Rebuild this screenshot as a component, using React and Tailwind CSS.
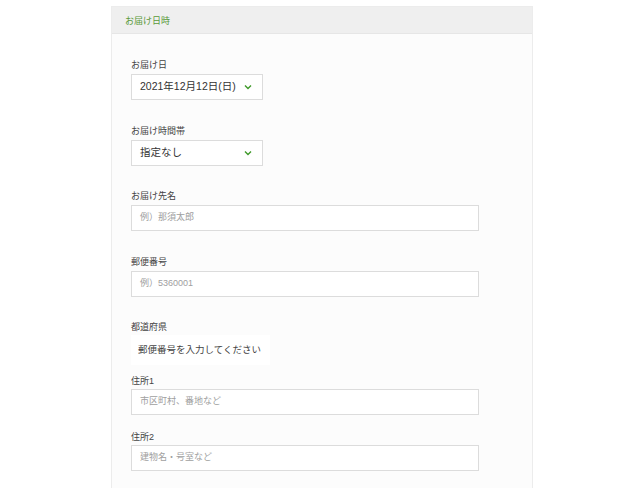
const FONT = { fontFamily: '"Liberation Sans", "Noto Sans CJK JP", sans-serif' }

function Chevron() {
  return (
    <svg width="8" height="6" viewBox="0 0 8 6" className="absolute right-[10px] top-1/2 -translate-y-1/2">
      <path d="M1 1.5 L4 4.5 L7 1.5" fill="none" stroke="#3f9a2a" strokeWidth="1.4" />
    </svg>
  )
}

function Select({ value }) {
  return (
    <div className="relative w-[132px] h-[26px] border border-[#dcdcdc] bg-white flex items-center pl-[8px] text-[10.5px] text-[#333]">
      {value}
      <Chevron />
    </div>
  )
}

function Input({ placeholder }) {
  return (
    <div className="w-[348px] h-[26px] border border-[#dcdcdc] bg-white flex items-center pl-[8px] text-[9px] text-[#a0a0a0]">
      {placeholder}
    </div>
  )
}

function Label({ children, tight }) {
  return (
    <div className={`flex items-center text-[9px] text-[#444] ${tight ? 'h-[16px] pt-[2px]' : 'h-[20px] pt-[4px]'}`}>
      {children}
    </div>
  )
}

export default function App() {
  return (
    <div className="w-[620px] h-[488px] bg-white overflow-hidden" style={FONT}>
      <div className="ml-[111px] mt-[6px] w-[422px] h-[520px] border border-[#ececec] bg-[#fcfcfc]">
        <div className="h-[27px] bg-[#efefef] border-b border-[#e6e6e6] flex items-center pl-[13px] pt-[3px] text-[9px] text-[#5a9a3a]">
          お届け日時
        </div>
        <div className="pl-[19px] pt-[20px]">
          <Label>お届け日</Label>
          <Select value="2021年12月12日(日)" />
          <div className="h-[20px]" />
          <Label>お届け時間帯</Label>
          <Select value="指定なし" />
          <div className="h-[19px]" />
          <Label>お届け先名</Label>
          <Input placeholder="例）那須太郎" />
          <div className="h-[20px]" />
          <Label>郵便番号</Label>
          <Input placeholder="例）5360001" />
          <div className="h-[22px]" />
          <Label tight>都道府県</Label>
          <div className="h-[30px] w-[139px] bg-white flex items-center pl-[7px] text-[9.5px] text-[#444]">郵便番号を入力してください</div>
          <div className="h-[8px]" />
          <Label tight>住所1</Label>
          <Input placeholder="市区町村、番地など" />
          <div className="h-[14px]" />
          <Label tight>住所2</Label>
          <Input placeholder="建物名・号室など" />
        </div>
      </div>
    </div>
  )
}
